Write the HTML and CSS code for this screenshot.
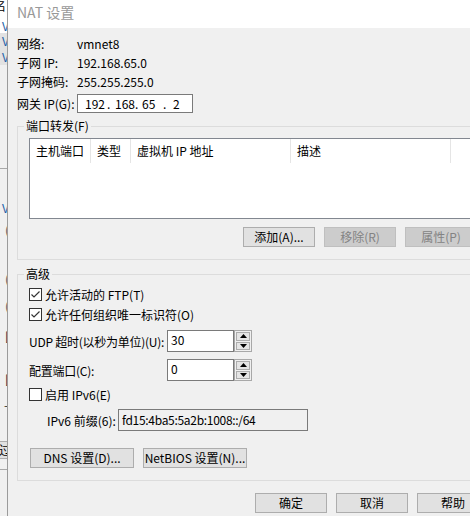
FILE: index.html
```html
<!DOCTYPE html>
<html lang="zh-CN">
<head>
<meta charset="utf-8">
<title>NAT 设置</title>
<link rel="stylesheet" href="styles.css">
</head>
<body>
<div class="desktop">
  <div class="behind">
    <div class="bk bk-title"><span class="g g-ming">名</span></div>
    <div class="bk bk-row r1"><span class="g g-v">V</span></div>
    <div class="bk bk-row r2 sel"><span class="g g-v">V</span></div>
    <div class="bk bk-row r2 sel"><span class="g g-v">V</span></div>
    <div class="bk bk-pane"></div>
    <div class="bk bk-row r2 m-31"><span class="g g-v">V</span></div>
    <div class="bk bk-row r2 m-6"><span class="g g-p">(</span></div>
    <div class="bk bk-row r2 m-33"><span class="g g-p">(</span></div>
    <div class="bk bk-row r2 m-11"><span class="g g-p">(</span></div>
    <div class="bk bk-row r2 m-14"><span class="g g-b">[</span></div>
    <div class="bk bk-row r2 m-27"><span class="g g-b">[</span></div>
    <div class="bk bk-row r2 m-10"><span class="g g-t">-</span></div>
    <div class="bk bk-btn"><span class="g g-btn">过</span></div>
    <div class="bk bk-line"></div>
  </div>

  <div class="dialog">
    <div class="titlebar">NAT 设置</div>
    <div class="client">
      <div class="info">
        <span>网络:</span><span>vmnet8</span>
        <span>子网 IP:</span><span>192.168.65.0</span>
        <span>子网掩码:</span><span>255.255.255.0</span>
      </div>
      <div class="gw">
        <span class="gw-label">网关 IP(G):</span>
        <div class="ipbox">
          <span class="seg s1">192</span><span class="seg d1">.</span><span class="seg s2">168</span><span class="seg d2">.</span><span class="seg s3">65</span><span class="seg d3">.</span><span class="seg s4">2</span>
        </div>
      </div>

      <fieldset class="group pf">
        <legend>端口转发(F)</legend>
        <div class="gbody">
          <div class="list">
            <div class="list-head">
              <div class="col c1">主机端口</div>
              <div class="col c2">类型</div>
              <div class="col c3">虚拟机 IP 地址</div>
              <div class="col c4">描述</div>
            </div>
          </div>
          <div class="btnrow end">
            <button class="btn">添加(A)...</button>
            <button class="btn dis">移除(R)</button>
            <button class="btn dis">属性(P)</button>
          </div>
        </div>
      </fieldset>

      <fieldset class="group adv">
        <legend>高级</legend>
        <div class="gbody">
          <div class="cbrow first">
            <span class="cb"><svg width="11" height="11" viewBox="0 0 11 11"><path d="M1.5 5.5 L4 8 L9.5 2.5" fill="none" stroke="#333" stroke-width="1.2"/></svg></span>
            <span>允许活动的 FTP(T)</span>
          </div>
          <div class="cbrow">
            <span class="cb"><svg width="11" height="11" viewBox="0 0 11 11"><path d="M1.5 5.5 L4 8 L9.5 2.5" fill="none" stroke="#333" stroke-width="1.2"/></svg></span>
            <span>允许任何组织唯一标识符(O)</span>
          </div>
          <div class="spinrow r-udp">
            <span class="spin-label">UDP 超时(以秒为单位)(U):</span>
            <div class="spin">
              <div class="spin-in">30</div>
              <div class="spin-btns">
                <div class="spin-b"><svg width="7" height="4" viewBox="0 0 7 4"><path d="M0 4 L3.5 0 L7 4 Z" fill="#000"/></svg></div>
                <div class="spin-b"><svg width="7" height="4" viewBox="0 0 7 4"><path d="M0 0 L3.5 4 L7 0 Z" fill="#000"/></svg></div>
              </div>
            </div>
          </div>
          <div class="spinrow r-port">
            <span class="spin-label">配置端口(C):</span>
            <div class="spin">
              <div class="spin-in">0</div>
              <div class="spin-btns">
                <div class="spin-b"><svg width="7" height="4" viewBox="0 0 7 4"><path d="M0 4 L3.5 0 L7 4 Z" fill="#000"/></svg></div>
                <div class="spin-b"><svg width="7" height="4" viewBox="0 0 7 4"><path d="M0 0 L3.5 4 L7 0 Z" fill="#000"/></svg></div>
              </div>
            </div>
          </div>
          <div class="cbrow r-v6">
            <span class="cb"></span>
            <span>启用 IPv6(E)</span>
          </div>
          <div class="v6row">
            <span class="v6-label">IPv6 前缀(6):</span>
            <div class="v6-in">fd15:4ba5:5a2b:1008::/64</div>
          </div>
          <div class="btnrow start">
            <button class="btn wide">DNS 设置(D)...</button>
            <button class="btn wide">NetBIOS 设置(N)...</button>
          </div>
        </div>
      </fieldset>

      <div class="footer">
        <button class="btn">确定</button>
        <button class="btn">取消</button>
        <button class="btn">帮助</button>
      </div>
    </div>
  </div>
</div>
</body>
</html>
```

FILE: styles.css
```css
* { box-sizing: border-box; }
html, body { margin: 0; padding: 0; }
body {
  width: 470px;
  height: 516px;
  overflow: hidden;
  background: #f0f0f0;
  font-family: "Noto Sans CJK SC", "Microsoft YaHei", sans-serif;
  font-size: 12px;
  color: #000;
}
.desktop { display: flex; height: 516px; }

/* window behind the dialog */
.behind {
  flex: none;
  width: 7px;
  display: flex;
  flex-direction: column;
  overflow: hidden;
  background: #f0f0f0;
}
.bk { flex: none; overflow: hidden; white-space: nowrap; }
.bk-title { height: 18px; background: #fff; line-height: 12px; }
.bk-row.r1 { height: 15px; line-height: 15px; background: #fff; }
.bk-row.r2 { height: 16px; line-height: 16px; }
.bk-row.sel { background: #e2e2e2; }
.bk-pane { height: 104px; border-bottom: 1px solid #a8a8a8; background: #f0f0f0; }
.m-31 { margin-top: 31px; }
.m-6 { margin-top: 6px; }
.m-33 { margin-top: 33px; }
.m-11 { margin-top: 11px; }
.m-14 { margin-top: 14px; }
.m-27 { margin-top: 27px; }
.m-10 { margin-top: 10px; }
.bk-btn { height: 18px; margin-top: 28px; border-top: 1px solid #adadad; border-bottom: 1px solid #adadad; background: #e1e1e1; line-height: 16px; }
.bk-line { height: 1px; margin-top: 10px; background: #a8a8a8; }
.g { display: inline-block; vertical-align: top; }
.g-ming { margin-left: -6px; line-height: 12px; }
.g-v { margin-left: 2px; color: #1c5fa8; }
.g-p { margin-left: 5px; color: #555; }
.g-b { margin-left: 5px; color: #222; }
.g-t { margin-left: 4px; color: #333; }
.g-btn { margin-left: -1px; }

/* dialog */
.dialog {
  flex: none;
  width: 492px;
  border-left: 1px solid #9b9b9b;
  display: flex;
  flex-direction: column;
}
.titlebar {
  height: 28px;
  background: #fff;
  padding-left: 9px;
  font-size: 14px;
  line-height: 25px;
  color: #999;
}
.client {
  flex: 1;
  background: #f0f0f0;
  padding: 6px 9px 0 9px;
}
.info {
  display: grid;
  grid-template-columns: 60px auto;
  line-height: 19px;
}
.gw { display: flex; align-items: center; margin-top: 3px; height: 19px; }
.gw-label { width: 60px; flex: none; }
.ipbox {
  width: 116px;
  height: 19px;
  border: 1px solid #7a7a7a;
  background: #fff;
  display: flex;
  padding-left: 7px;
  line-height: 17px;
}
.seg { flex: none; }
.s1 { width: 22px; }
.d1 { width: 8px; }
.s2 { width: 20px; }
.d2 { width: 7px; }
.s3 { width: 21px; }
.d3 { width: 10px; }

/* group boxes */
.group {
  width: 473px;
  min-width: 0;
  margin: 5px 0 0 0;
  padding: 0 12px 12px 6px;
  border: 1px solid #dcdcdc;
}
.group legend { padding: 0 2px; line-height: 16px; }
.group.adv { margin-top: 6px; }
.gbody { margin-left: 5px; }

.list {
  margin-top: 4px;
  width: 448px;
  height: 81px;
  border: 1px solid #828790;
  background: #fff;
}
.list-head { display: flex; height: 24px; }
.col {
  flex: none;
  height: 24px;
  line-height: 24px;
  padding-left: 6px;
  border-right: 1px solid #e5e5e5;
  white-space: nowrap;
}
.c1 { width: 61px; }
.c2 { width: 40px; }
.c3 { width: 160px; }
.c4 { width: 160px; }

.btnrow { display: flex; gap: 9px; margin-top: 8px; }
.btnrow.end { justify-content: flex-end; }
.btnrow.start { justify-content: flex-start; margin-top: 17px; padding-left: 1px; }
.btn {
  flex: none;
  width: 72px;
  height: 20px;
  padding: 0;
  margin: 0;
  border: 1px solid #adadad;
  background: #e1e1e1;
  font: inherit;
  line-height: 18px;
  color: #000;
  text-align: center;
  white-space: nowrap;
}
.btn.wide { width: 104px; }
.btn.dis { background: #cccccc; border-color: #bfbfbf; color: #838383; }

/* advanced */
.cbrow { display: flex; align-items: center; height: 20px; }
.cbrow.first { margin-top: 2px; }
.cbrow.r-v6 { margin-top: 3px; }
.cb {
  flex: none;
  width: 13px;
  height: 13px;
  margin-right: 3px;
  border: 1px solid #333;
  background: #fff;
  display: flex;
  align-items: center;
  justify-content: center;
}
.spinrow { display: flex; align-items: center; height: 22px; }
.spinrow.r-udp { margin-top: 6px; }
.spinrow.r-port { margin-top: 7px; }
.spin-label { width: 138px; flex: none; white-space: nowrap; letter-spacing: -0.25px; }
.spin { display: flex; height: 22px; }
.spin-in {
  width: 67px;
  height: 22px;
  border: 1px solid #7a7a7a;
  background: #fff;
  padding-left: 3px;
  line-height: 18px;
}
.spin-btns {
  width: 18px;
  height: 22px;
  border: 1px solid #a8a8a8;
  padding: 1px;
  display: flex;
  flex-direction: column;
  gap: 1px;
  background: #f0f0f0;
}
.spin-b {
  flex: 1;
  border: 1px solid #adadad;
  background: #e5e5e5;
  display: flex;
  align-items: center;
  justify-content: center;
}
.v6row { display: flex; align-items: center; height: 22px; margin-top: 5px; padding-left: 18px; }
.v6-label { width: 71px; flex: none; white-space: nowrap; }
.v6-in {
  width: 190px;
  height: 22px;
  border: 1px solid #7a7a7a;
  background: #f0f0f0;
  padding-left: 3px;
  line-height: 20px;
  letter-spacing: -0.3px;
  white-space: nowrap;
}

.footer {
  width: 472px;
  display: flex;
  justify-content: flex-end;
  gap: 9px;
  margin-top: 12px;
}
```
